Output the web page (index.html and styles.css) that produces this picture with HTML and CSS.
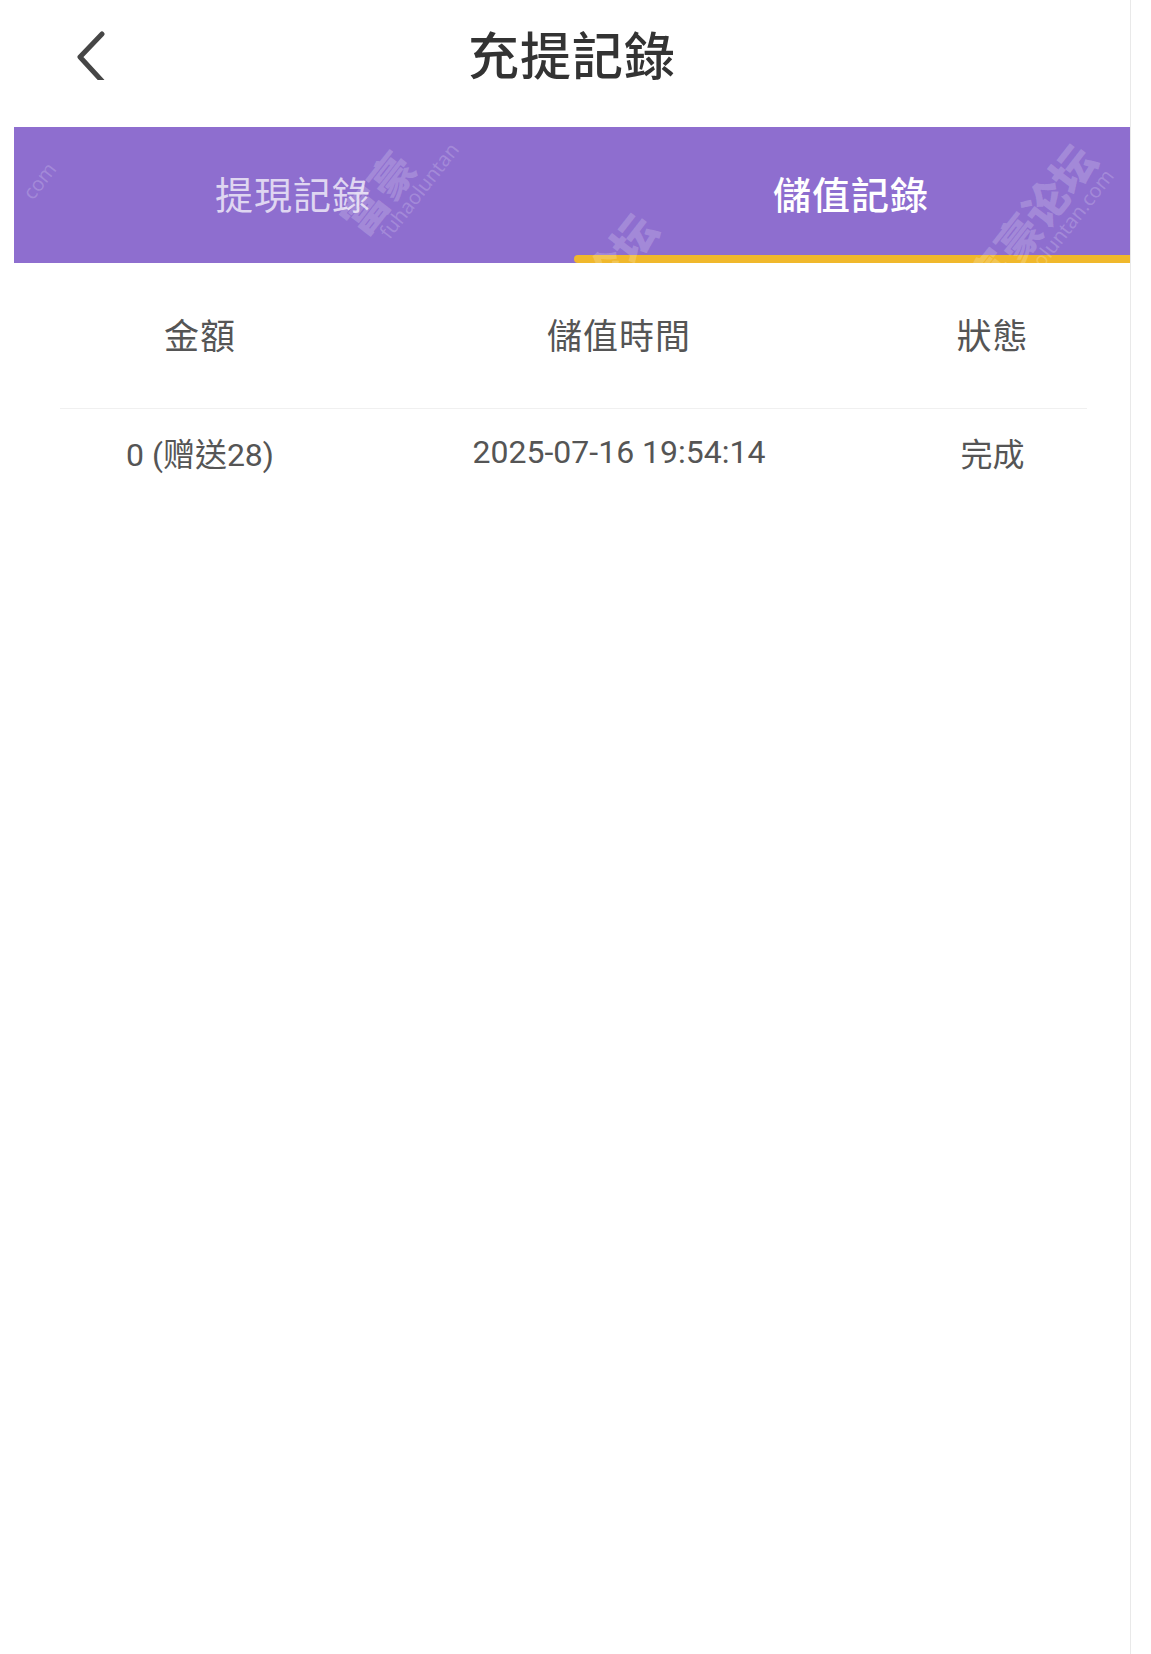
FILE: index.html
```html
<!DOCTYPE html>
<html lang="zh-Hant">
<head>
<meta charset="utf-8">
<title>充提記錄</title>
<link rel="stylesheet" href="styles.css">
</head>
<body>
<div class="page">
  <header class="topbar">
    <button class="back" aria-label="返回">
      <svg width="40" height="60" viewBox="0 0 40 60">
        <path d="M30 14 L8 37 L30 61" fill="none" stroke="#464646" stroke-width="5" stroke-linecap="round" stroke-linejoin="round"/>
      </svg>
    </button>
    <h1 class="title">充提記錄</h1>
  </header>

  <nav class="tabs">
    <div class="tab">提現記錄</div>
    <div class="tab active">儲值記錄</div>
    <div class="wm wm1"><span class="wm-big">富豪</span><span class="wm-small">fuhaoluntan</span></div>
    <div class="wm wm2"><span class="wm-big">富豪论坛</span><span class="wm-small">fuhaoluntan.com</span></div>
    <div class="wm wm3"><span class="wm-big">论坛</span></div>
    <div class="wm wm4"><span class="wm-small">com</span></div>
  </nav>

  <section class="table">
    <div class="row head">
      <div class="cell">金額</div>
      <div class="cell">儲值時間</div>
      <div class="cell">狀態</div>
    </div>
    <div class="row data">
      <div class="cell">0 (赠送28)</div>
      <div class="cell">2025-07-16 19:54:14</div>
      <div class="cell">完成</div>
    </div>
  </section>
</div>
</body>
</html>
```

FILE: styles.css
```css
* { box-sizing: border-box; }
html, body {
  margin: 0;
  padding: 0;
  background: #ffffff;
}
body {
  width: 1151px;
  height: 1654px;
  overflow: hidden;
  font-family: "Noto Sans CJK TC", "Noto Sans", Roboto, sans-serif;
}
.page {
  width: 1131px;
  min-height: 1654px;
  border-right: 1px solid #e9e9e9;
}
.topbar {
  height: 127px;
  display: flex;
  align-items: center;
  justify-content: center;
  position: relative;
}
.back {
  position: absolute;
  left: 72px;
  top: 14px;
  width: 40px;
  height: 75px;
  border: 0;
  padding: 0;
  background: transparent;
}
.title {
  margin: 0;
  margin-left: 14px;
  margin-top: -22px;
  font-size: 51px;
  font-weight: 500;
  color: #333333;
  letter-spacing: 1px;
}
.tabs {
  position: relative;
  overflow: hidden;
  margin-left: 14px;
  width: 1116px;
  height: 136px;
  background: #8e6ecf;
  display: grid;
  grid-template-columns: 1fr 1fr;
}
.tab {
  display: flex;
  align-items: center;
  justify-content: center;
  font-size: 38px;
  color: rgba(255, 255, 255, 0.72);
  letter-spacing: 1px;
  padding-bottom: 6px;
  position: relative;
}
.tab.active {
  color: #ffffff;
  font-weight: 500;
}
.tab.active::after {
  content: "";
  position: absolute;
  left: 2px;
  right: 0;
  bottom: 0;
  height: 8px;
  background: #f0b82c;
  border-radius: 4px 0 0 4px;
}
.wm {
  position: absolute;
  display: flex;
  flex-direction: column;
  align-items: flex-start;
  transform: rotate(-52deg);
  transform-origin: left top;
  color: rgba(255, 255, 255, 0.2);
  pointer-events: none;
  white-space: nowrap;
}
.wm-big {
  font-family: "Noto Sans CJK SC", sans-serif;
  font-weight: 900;
  font-size: 44px;
  line-height: 1;
}
.wm-small {
  font-family: "Open Sans", sans-serif;
  font-size: 20px;
  line-height: 1.1;
  margin-left: 14px;
}
.wm1 { left: 318px; top: 86px; }
.wm2 { left: 945px; top: 148px; }
.wm3 { left: 560px; top: 148px; }
.wm4 { left: -4px; top: 74px; }
.table {
  margin-left: 60px;
  width: 1027px;
}
.row {
  display: grid;
  grid-template-columns: 280px 558px 1fr;
}
.cell {
  text-align: center;
}
.head {
  height: 146px;
  align-items: center;
  border-bottom: 1px solid #f0f0f0;
  font-size: 35px;
  color: #555555;
  letter-spacing: 1px;
  padding-bottom: 4px;
}
.data {
  height: 92px;
  align-items: center;
  font-family: Roboto, "Noto Sans CJK SC", sans-serif;
  font-size: 32px;
  color: #555555;
  padding-bottom: 6px;
}
.data .cell:nth-child(3) {
  font-family: "Noto Sans CJK TC", sans-serif;
}
```
